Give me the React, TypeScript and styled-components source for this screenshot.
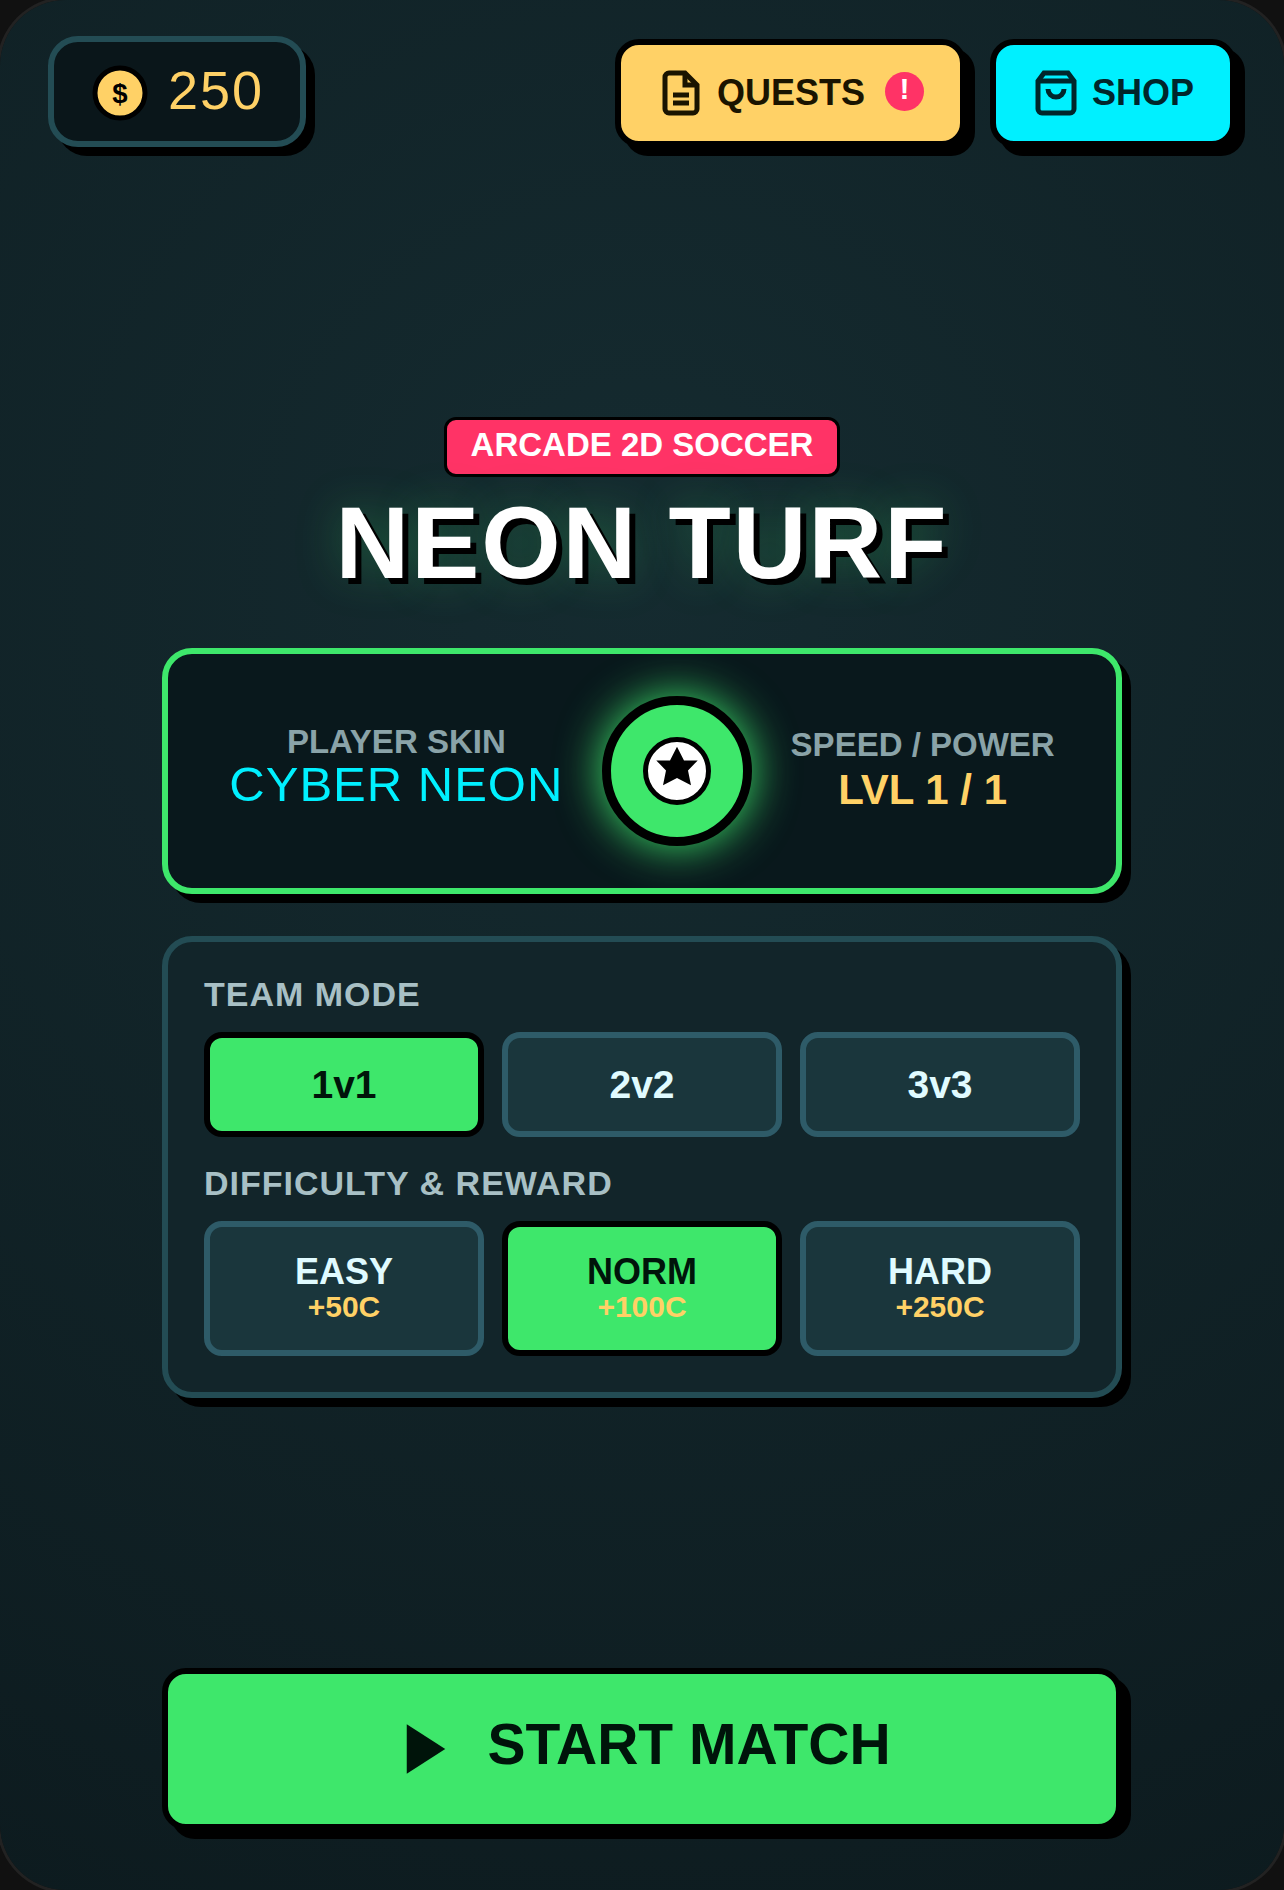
import React, { useState } from "react";
import styled, { createGlobalStyle } from "styled-components";

const color = {
  green: "#3ee76b",
  gold: "#ffd166",
  cyan: "#00f0ff",
  pink: "#ff3366",
  edge: "#234c54",
  optionEdge: "#2e5b68",
  option: "#1a363c",
  ink: "#00140a",
};

const GlobalStyle = createGlobalStyle`
  *, *::before, *::after {
    box-sizing: border-box;
  }

  body {
    margin: 0;
    background: #111;
    font-family: "Liberation Sans", Arial, Helvetica, sans-serif;
  }
`;

const Frame = styled.div`
  display: flex;
  flex-direction: column;
  min-height: 100vh;
  padding: 36px 48px 60px;
  overflow: hidden;
  border-radius: 66px;
  background: radial-gradient(circle at 50% 30%, #152b30 0%, #0d1b1f 100%);
  box-shadow: 0 0 0 3px #222;
`;

const TopBar = styled.header`
  display: flex;
  flex-wrap: wrap;
  align-items: flex-end;
  justify-content: space-between;
  gap: 24px;
`;

const Wallet = styled.div`
  display: flex;
  align-items: flex-end;
  gap: 18px;
  padding: 18px 36px;
  border: 6px solid ${color.edge};
  border-radius: 30px;
  background: #0a161a;
  box-shadow: 9px 9px 0 #000;
`;

const CoinIcon = styled.svg`
  display: block;
  width: 60px;
  height: 60px;
  font-size: 11px;
  font-weight: 700;
`;

const Balance = styled.span`
  padding-bottom: 3px;
  color: ${color.gold};
  font-size: 54px;
  line-height: 60px;
  letter-spacing: 2px;
`;

const Actions = styled.nav`
  display: flex;
  gap: 24px;
`;

const PushButton = styled.button<{ $fill: string; $ink: string }>`
  display: flex;
  align-items: center;
  justify-content: center;
  gap: 12px;
  padding: 24px 36px;
  border: 6px solid #000;
  border-radius: 24px;
  background: ${(p) => p.$fill};
  box-shadow: 9px 9px 0 #000;
  color: ${(p) => p.$ink};
  font-family: inherit;
  font-size: 36px;
  font-weight: 700;
  line-height: 42px;
  cursor: pointer;
`;

const LineIcon = styled.svg`
  display: block;
  width: 48px;
  height: 48px;
  fill: none;
  stroke: currentColor;
  stroke-width: 2.5;
`;

const Alert = styled.span`
  width: 39px;
  margin: 0 0 3px 8px;
  padding-bottom: 5px;
  border-radius: 50%;
  background: ${color.pink};
  color: #fff;
  font-size: 30px;
  line-height: 34px;
  text-align: center;
`;

const Main = styled.main`
  display: flex;
  flex: 1;
  flex-direction: column;
  align-items: center;
  justify-content: center;
  width: 100%;
  max-width: 960px;
  margin: 0 auto;
`;

const Tag = styled.p`
  margin: 0 0 15px;
  padding: 6px 24px 10px;
  border: 3px solid #000;
  border-radius: 12px;
  background: ${color.pink};
  color: #fff;
  font-size: 33px;
  font-weight: 700;
  line-height: 38px;
`;

const Title = styled.h1`
  margin: 0 0 54px;
  color: #fff;
  font-size: 102px;
  font-weight: 700;
  line-height: 102px;
  letter-spacing: 2px;
  text-align: center;
  text-shadow: 6px 6px 0 #000, 0 0 45px rgba(63, 233, 109, 0.3);
`;

const PlayerCard = styled.section`
  display: flex;
  flex-wrap: wrap;
  align-items: center;
  justify-content: space-around;
  width: 100%;
  margin-bottom: 42px;
  padding: 42px;
  border: 6px solid ${color.green};
  border-radius: 30px;
  background: #09181c;
  box-shadow: 9px 9px 0 #000;
`;

const Stat = styled.div`
  display: flex;
  flex-direction: column;
  align-items: center;
`;

const StatLabel = styled.span`
  color: #8aa3a8;
  font-size: 33px;
  font-weight: 700;
  line-height: 38px;
`;

const SkinName = styled.span`
  margin-bottom: 12px;
  color: ${color.cyan};
  font-size: 49px;
  line-height: 46px;
  letter-spacing: 1px;
`;

const Level = styled.span`
  color: ${color.gold};
  font-size: 42px;
  font-weight: 700;
  line-height: 52px;
`;

const Avatar = styled.div`
  display: flex;
  align-items: center;
  justify-content: center;
  width: 150px;
  height: 150px;
  border: 9px solid #000;
  border-radius: 50%;
  background: ${color.green};
  box-shadow: 0 0 45px ${color.green};
`;

const AvatarMark = styled.svg`
  display: block;
  width: 68px;
  height: 68px;
`;

const SettingsCard = styled.section`
  display: flex;
  flex-direction: column;
  gap: 30px;
  width: 100%;
  padding: 36px;
  border: 6px solid ${color.edge};
  border-radius: 30px;
  background: #12252a;
  box-shadow: 9px 9px 0 #000;
`;

const SettingLabel = styled.h2`
  margin: 0 0 22px;
  color: #a8c0c5;
  font-size: 34px;
  font-weight: 700;
  line-height: 32px;
  letter-spacing: 1px;
`;

const Options = styled.div`
  display: grid;
  grid-template-columns: repeat(3, 1fr);
  gap: 18px;
`;

const Option = styled.button<{ $active: boolean }>`
  display: flex;
  flex-direction: column;
  align-items: center;
  padding: 24px 6px;
  border: 6px solid ${(p) => (p.$active ? "#000" : color.optionEdge)};
  border-radius: 18px;
  background: ${(p) => (p.$active ? color.green : color.option)};
  color: ${(p) => (p.$active ? color.ink : "#e0fbff")};
  font-family: inherit;
  font-weight: 700;
  cursor: pointer;
`;

const ModeName = styled.span`
  font-size: 39px;
  line-height: 45px;
`;

const LevelName = styled.span`
  font-size: 36px;
  line-height: 42px;
`;

const Reward = styled.span`
  margin-bottom: 6px;
  color: ${color.gold};
  font-size: 30px;
  line-height: 27px;
`;

const Footer = styled.footer`
  width: 100%;
  max-width: 960px;
  margin: 0 auto;
`;

const StartButton = styled(PushButton)`
  gap: 28px;
  width: 100%;
  padding: 42px;
`;

const PlayIcon = styled.svg`
  display: block;
  width: 66px;
  height: 66px;
  fill: currentColor;
`;

const StartLabel = styled.span`
  padding-bottom: 9px;
  font-size: 57px;
  line-height: 57px;
`;

const modes = ["1v1", "2v2", "3v3"];

const difficulties = [
  { name: "EASY", reward: "+50C" },
  { name: "NORM", reward: "+100C" },
  { name: "HARD", reward: "+250C" },
];

export default function App() {
  const [mode, setMode] = useState("1v1");
  const [difficulty, setDifficulty] = useState("NORM");

  return (
    <>
      <GlobalStyle />
      <Frame>
        <TopBar>
          <Wallet>
            <CoinIcon viewBox="0 0 24 24" aria-hidden="true">
              <circle cx="12" cy="12" r="10" fill={color.gold} stroke="#000" strokeWidth="2" />
              <text x="12" y="16" textAnchor="middle" fill="#000">
                $
              </text>
            </CoinIcon>
            <Balance>250</Balance>
          </Wallet>
          <Actions>
            <PushButton type="button" $fill={color.gold} $ink="#1a1400">
              <LineIcon viewBox="0 0 24 24" aria-hidden="true">
                <path d="M14 2H6a2 2 0 0 0-2 2v16a2 2 0 0 0 2 2h12a2 2 0 0 0 2-2V8z" />
                <polyline points="14 2 14 8 20 8" />
                <line x1="16" y1="13" x2="8" y2="13" />
                <line x1="16" y1="17" x2="8" y2="17" />
              </LineIcon>
              QUESTS
              <Alert>!</Alert>
            </PushButton>
            <PushButton type="button" $fill={color.cyan} $ink="#00262b">
              <LineIcon viewBox="0 0 24 24" aria-hidden="true">
                <path d="M6 2L3 6v14a2 2 0 0 0 2 2h14a2 2 0 0 0 2-2V6l-3-4z" />
                <line x1="3" y1="6" x2="21" y2="6" />
                <path d="M16 10a4 4 0 0 1-8 0" />
              </LineIcon>
              SHOP
            </PushButton>
          </Actions>
        </TopBar>

        <Main>
          <Tag>ARCADE 2D SOCCER</Tag>
          <Title>NEON TURF</Title>

          <PlayerCard>
            <Stat>
              <StatLabel>PLAYER SKIN</StatLabel>
              <SkinName>CYBER NEON</SkinName>
            </Stat>
            <Avatar>
              <AvatarMark viewBox="-34 -34 68 68" aria-hidden="true">
                <circle r="31.5" fill="#fff" stroke="#000" strokeWidth="5" />
                <polygon points="0,-24.3 7,-10.6 20.7,-10.6 11,-0.4 14,14.3 0,7 -14,14.3 -11,-0.4 -20.7,-10.6 -7,-10.6" />
              </AvatarMark>
            </Avatar>
            <Stat>
              <StatLabel>SPEED / POWER</StatLabel>
              <Level>LVL 1 / 1</Level>
            </Stat>
          </PlayerCard>

          <SettingsCard>
            <div role="group" aria-labelledby="team-mode">
              <SettingLabel id="team-mode">TEAM MODE</SettingLabel>
              <Options>
                {modes.map((name) => (
                  <Option
                    key={name}
                    type="button"
                    $active={mode === name}
                    aria-pressed={mode === name}
                    onClick={() => setMode(name)}
                  >
                    <ModeName>{name}</ModeName>
                  </Option>
                ))}
              </Options>
            </div>
            <div role="group" aria-labelledby="difficulty">
              <SettingLabel id="difficulty">DIFFICULTY &amp; REWARD</SettingLabel>
              <Options>
                {difficulties.map(({ name, reward }) => (
                  <Option
                    key={name}
                    type="button"
                    $active={difficulty === name}
                    aria-pressed={difficulty === name}
                    onClick={() => setDifficulty(name)}
                  >
                    <LevelName>{name}</LevelName>
                    <Reward>{reward}</Reward>
                  </Option>
                ))}
              </Options>
            </div>
          </SettingsCard>
        </Main>

        <Footer>
          <StartButton type="button" $fill={color.green} $ink={color.ink}>
            <PlayIcon viewBox="0 0 24 24" aria-hidden="true">
              <polygon points="5 3 19 12 5 21" />
            </PlayIcon>
            <StartLabel>START MATCH</StartLabel>
          </StartButton>
        </Footer>
      </Frame>
    </>
  );
}
